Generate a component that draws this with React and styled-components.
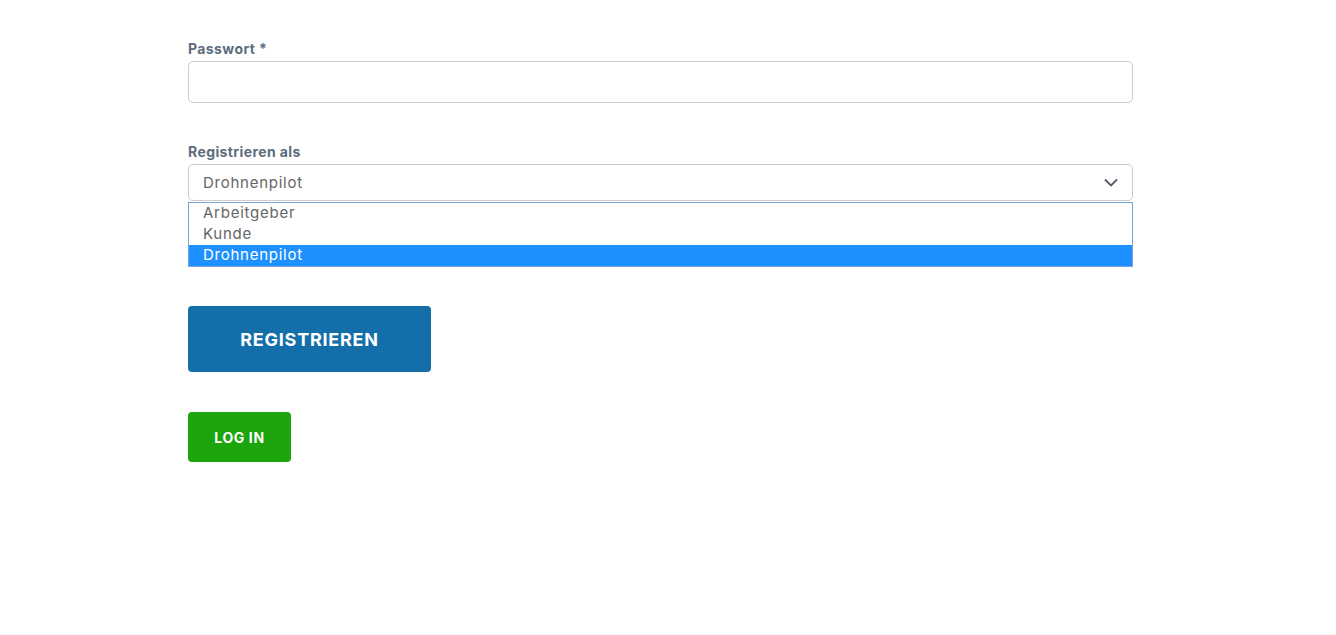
import React, { useState } from "react";
import styled, { createGlobalStyle } from "styled-components";

const GlobalStyle = createGlobalStyle`
  body {
    margin: 0;
    background: #ffffff;
    font-family: Inter, "DejaVu Sans", sans-serif;
  }
`;

const Page = styled.div`
  padding: 41px 0 0 188px;
`;

const Form = styled.form`
  width: 945px;
  display: flex;
  flex-direction: column;
`;

const Field = styled.div`
  display: flex;
  flex-direction: column;
  margin-bottom: ${({ $gap }) => $gap || 0}px;
`;

const Label = styled.label`
  font-size: 14px;
  font-weight: 700;
  line-height: 16px;
  letter-spacing: 0.4px;
  color: #5d6d7c;
  margin-bottom: 4px;
`;

const Input = styled.input`
  box-sizing: border-box;
  height: 42px;
  border: 1px solid #cccccc;
  border-radius: 5px;
  padding: 0 14px;
  font-size: 15px;
  font-family: inherit;
  outline: none;
`;

const SelectBox = styled.div`
  box-sizing: border-box;
  height: 37px;
  border: 1px solid #cccccc;
  border-radius: 5px;
  padding: 0 14px;
  display: flex;
  align-items: center;
  justify-content: space-between;
  font-size: 15px;
  letter-spacing: 0.75px;
  color: #666666;
`;

const Options = styled.ul`
  list-style: none;
  margin: 1px 0 0;
  padding: 0;
  border: 1px solid #7ba3e0;
  box-sizing: border-box;
`;

const Option = styled.li`
  box-sizing: border-box;
  height: 21px;
  line-height: 19px;
  padding: 0 0 2px 14px;
  font-size: 15px;
  letter-spacing: 0.75px;
  color: ${({ $active }) => ($active ? "#ffffff" : "#666666")};
  background: ${({ $active }) => ($active ? "#1e90ff" : "transparent")};
`;

const Button = styled.button`
  box-sizing: border-box;
  width: ${({ $w }) => $w}px;
  height: ${({ $h }) => $h}px;
  border: none;
  border-radius: 4px;
  background: ${({ $bg }) => $bg};
  color: #ffffff;
  font-family: inherit;
  font-weight: 700;
  font-size: ${({ $fs }) => $fs}px;
  letter-spacing: ${({ $ls }) => $ls}px;
  text-transform: uppercase;
  cursor: pointer;
  padding: 0;
  margin-bottom: ${({ $mb }) => $mb || 0}px;
`;

const Chevron = () => (
  <svg width="14" height="9" viewBox="0 0 14 9" fill="none">
    <path d="M1 1.5 L7 7.5 L13 1.5" stroke="#555b66" strokeWidth="1.8" />
  </svg>
);

const roles = ["Arbeitgeber", "Kunde", "Drohnenpilot"];

export default function App() {
  const [role, setRole] = useState("Drohnenpilot");

  return (
    <Page>
      <GlobalStyle />
      <Form onSubmit={(e) => e.preventDefault()}>
        <Field $gap={41}>
          <Label>Passwort *</Label>
          <Input type="password" />
        </Field>
        <Field $gap={39}>
          <Label>Registrieren als</Label>
          <SelectBox>
            <span>{role}</span>
            <Chevron />
          </SelectBox>
          <Options>
            {roles.map((r) => (
              <Option key={r} $active={r === role} onClick={() => setRole(r)}>
                {r}
              </Option>
            ))}
          </Options>
        </Field>
        <Button $w={243} $h={66} $bg="#146ea9" $fs={18} $ls={0.75} $mb={40}>
          Registrieren
        </Button>
        <Button type="button" $w={103} $h={50} $bg="#1ca50c" $fs={14} $ls={0.6}>
          Log in
        </Button>
      </Form>
    </Page>
  );
}
